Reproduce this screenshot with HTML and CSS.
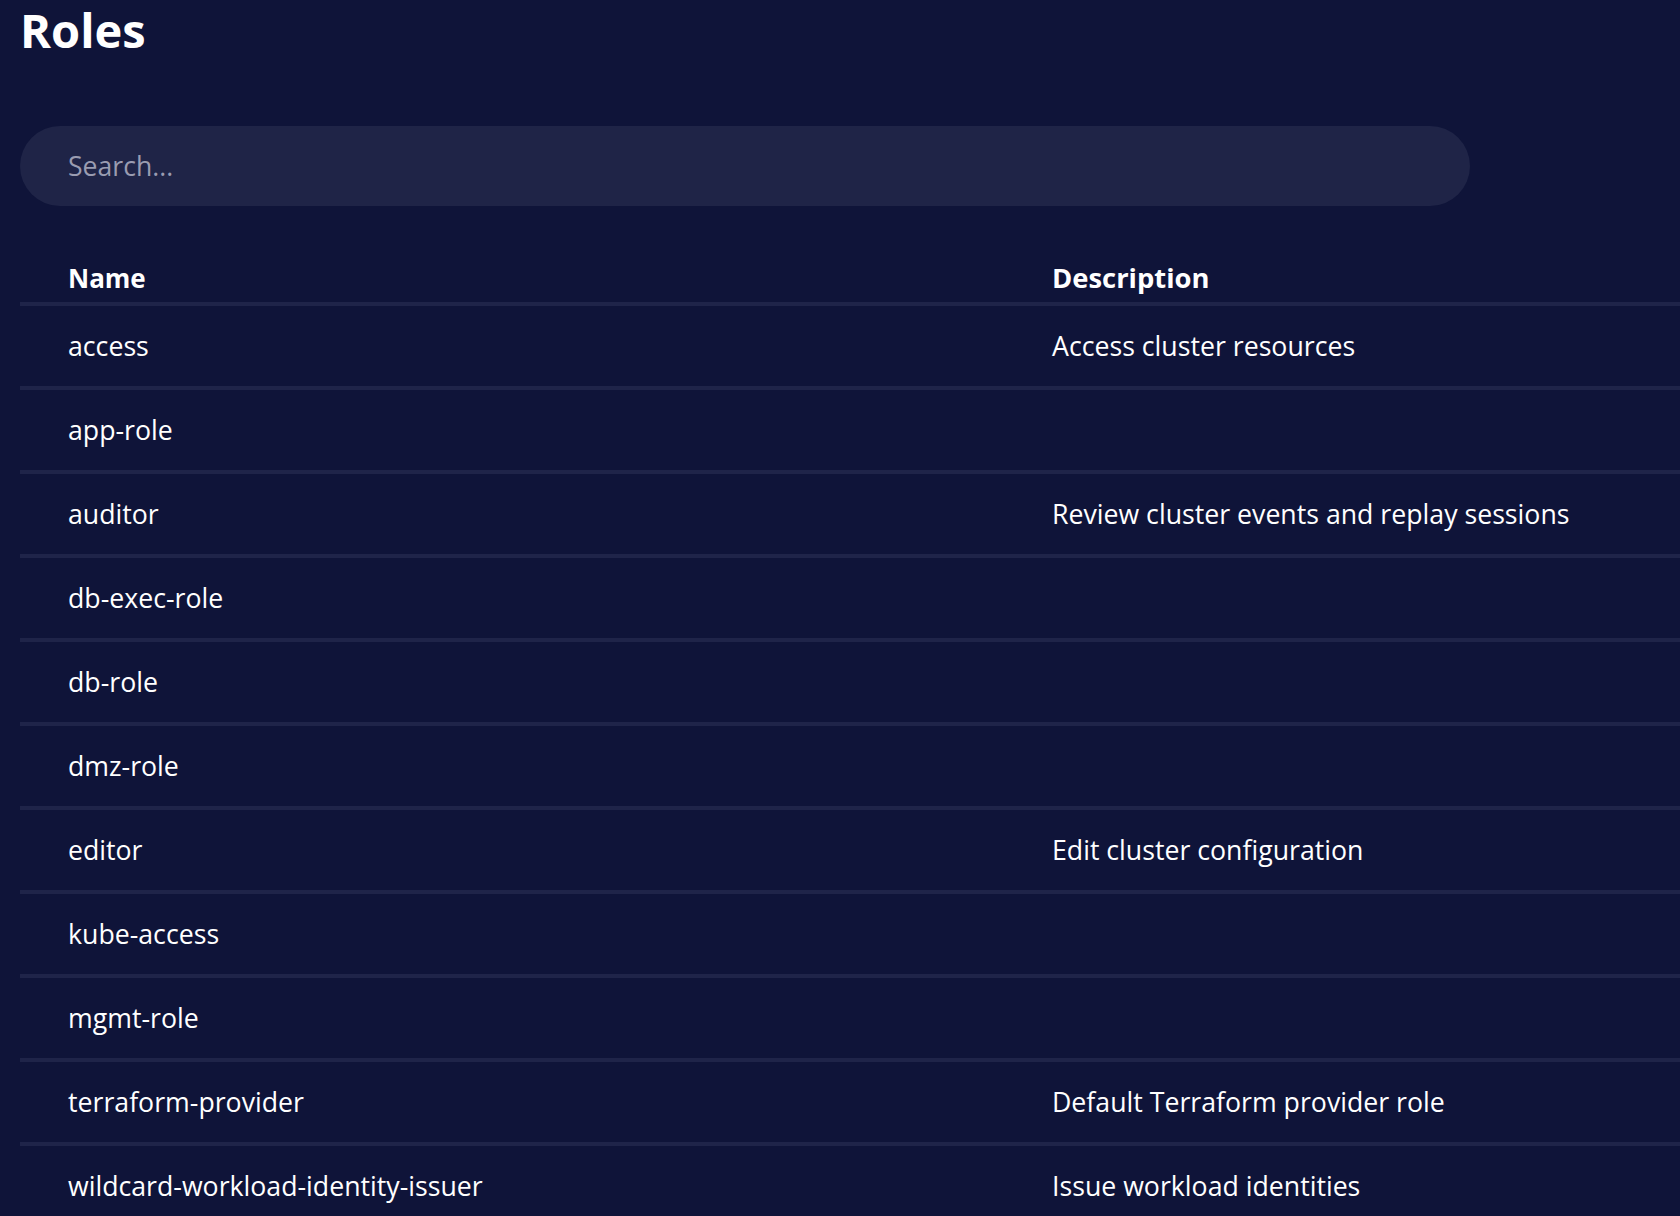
FILE: index.html
```html
<!DOCTYPE html>
<html lang="en">
<head>
<meta charset="utf-8">
<title>Roles</title>
<link rel="stylesheet" href="styles.css">
</head>
<body>
<main class="page">
  <h1 class="title">Roles</h1>
  <div class="search">
    <input class="search-input" type="text" placeholder="Search...">
  </div>
  <table class="roles">
    <thead>
      <tr>
        <th class="col-name">Name</th>
        <th class="col-desc">Description</th>
      </tr>
    </thead>
    <tbody>
      <tr><td>access</td><td>Access cluster resources</td></tr>
      <tr><td>app-role</td><td></td></tr>
      <tr><td>auditor</td><td>Review cluster events and replay sessions</td></tr>
      <tr><td>db-exec-role</td><td></td></tr>
      <tr><td>db-role</td><td></td></tr>
      <tr><td>dmz-role</td><td></td></tr>
      <tr><td>editor</td><td>Edit cluster configuration</td></tr>
      <tr><td>kube-access</td><td></td></tr>
      <tr><td>mgmt-role</td><td></td></tr>
      <tr><td>terraform-provider</td><td>Default Terraform provider role</td></tr>
      <tr><td>wildcard-workload-identity-issuer</td><td>Issue workload identities</td></tr>
    </tbody>
  </table>
</main>
</body>
</html>
```
FILE: styles.css
```css
html, body {
  margin: 0;
  padding: 0;
  background: #0f1439;
  overflow: hidden;
}
body {
  font-family: "Open Sans", "Noto Sans", sans-serif;
  color: #ffffff;
}
.page {
  padding: 0 0 0 20px;
}
.title {
  margin: 0;
  font-size: 47px;
  font-weight: 700;
  line-height: 60px;
  padding-top: 0;
}
.search {
  margin-top: 66px;
  width: 1450px;
}
.search-input {
  box-sizing: border-box;
  width: 100%;
  height: 80px;
  border: none;
  outline: none;
  border-radius: 40px;
  background: #1f2447;
  color: #ffffff;
  font-family: inherit;
  font-size: 26.6px;
  padding: 0 0 0 48px;
}
.search-input::placeholder {
  color: #9a9cb1;
}
.roles {
  margin-top: 48px;
  width: 1660px;
  border-collapse: collapse;
  table-layout: fixed;
}
.roles th, .roles td {
  text-align: left;
  padding: 0 0 0 48px;
  white-space: nowrap;
}
.roles th {
  font-size: 26px;
  font-weight: 700;
  height: 48px;
  line-height: 36px;
  vertical-align: middle;
  border-bottom: 4px solid #1f2449;
}
.roles th.col-desc {
  font-size: 27.4px;
}
.col-name {
  width: 936px;
}
.roles td {
  box-sizing: border-box;
  font-size: 26.7px;
  font-weight: 400;
  height: 84px;
  padding-bottom: 2px;
  border-bottom: 4px solid #1f2449;
}
```
